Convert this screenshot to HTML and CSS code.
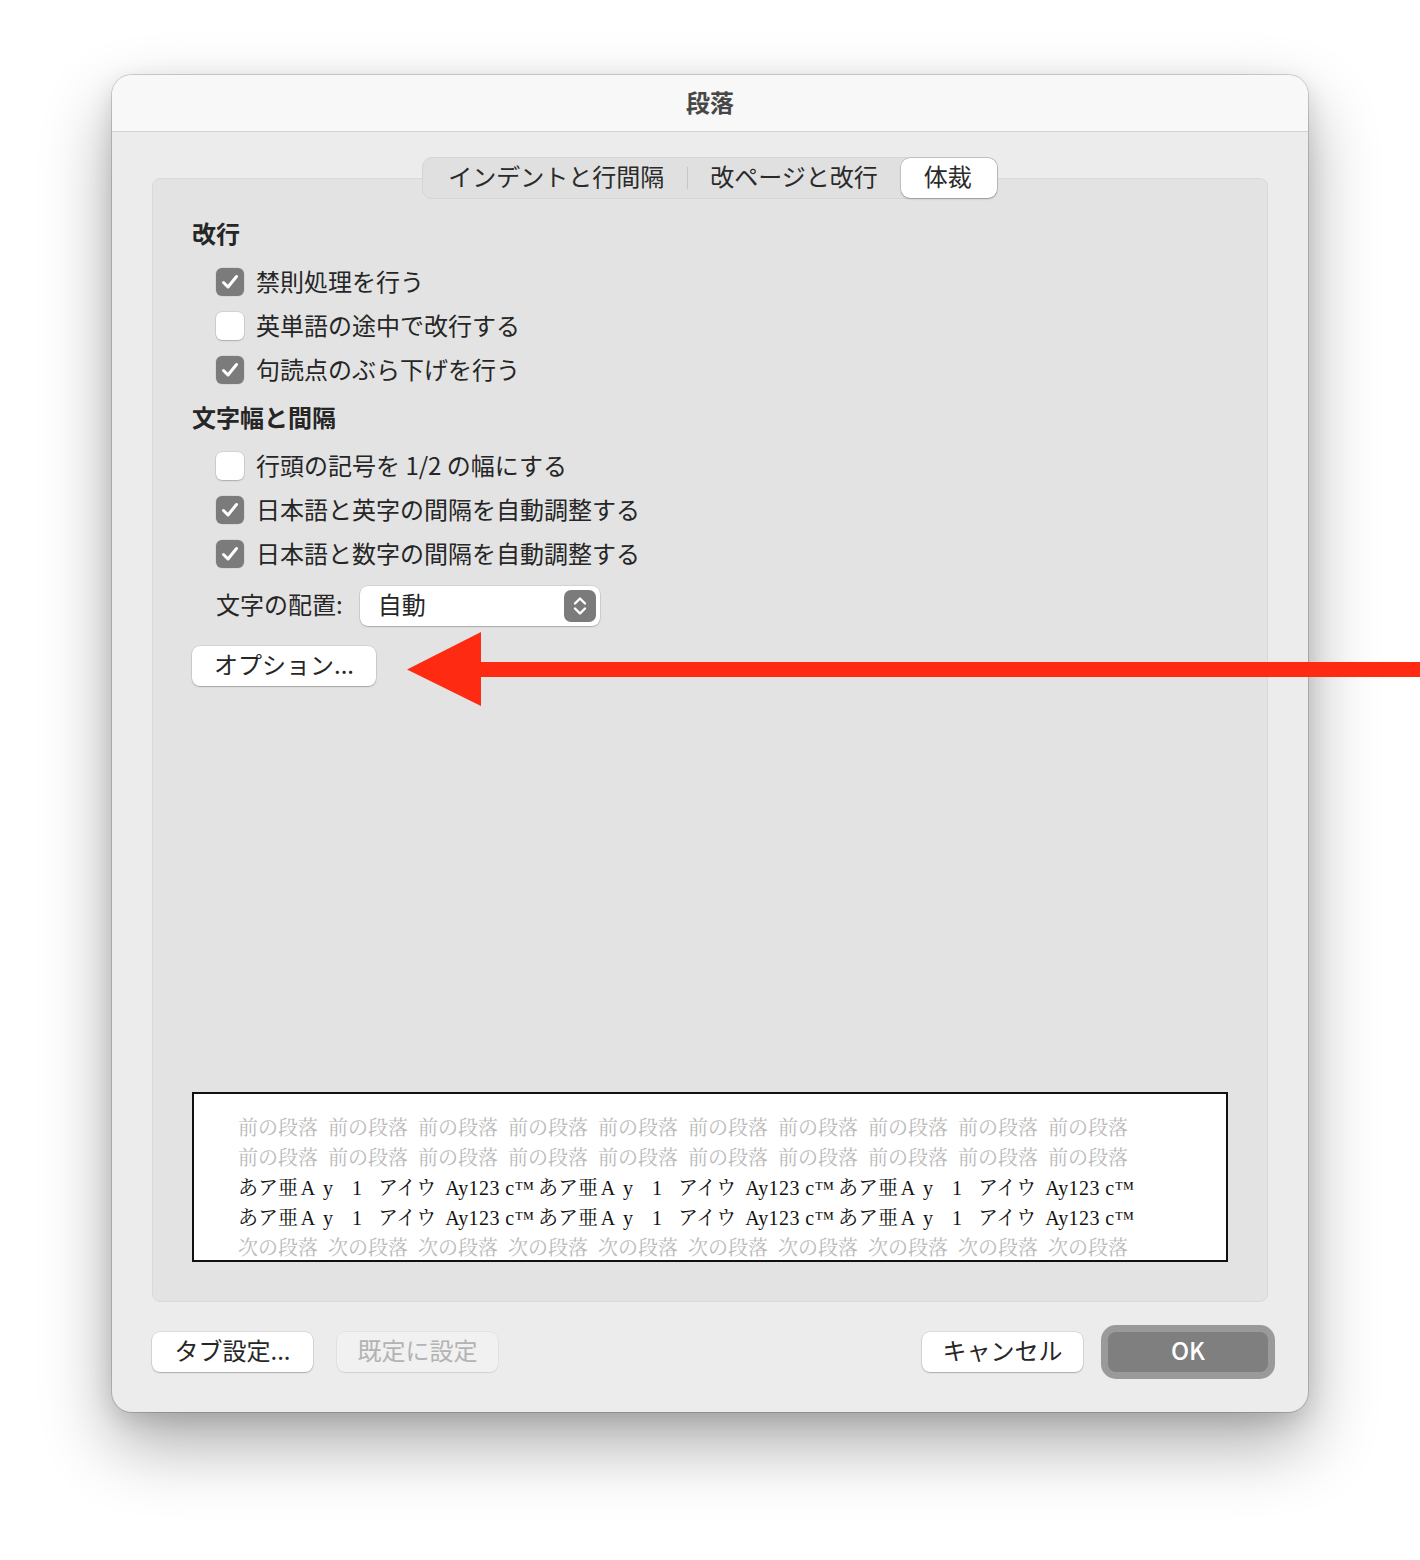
FILE: index.html
```html
<!DOCTYPE html>
<html lang="ja">
<head>
<meta charset="utf-8">
<title>段落</title>
<link rel="stylesheet" href="styles.css">
</head>
<body>
<div class="stage">
  <div class="window">
    <div class="titlebar">段落</div>
    <div class="content">
      <div class="tabs">
        <div class="tab t1">インデントと行間隔</div>
        <div class="tab-sep"></div>
        <div class="tab t2">改ページと改行</div>
        <div class="tab t3 active">体裁</div>
      </div>
      <div class="group">
        <div class="section-title">改行</div>
        <div class="opts">
          <div class="row"><span class="cb on"><svg viewBox="0 0 28 28" width="28" height="28"><path d="M7.5 14.5 L12 19 L20.5 8.5" fill="none" stroke="#fff" stroke-width="3" stroke-linecap="round" stroke-linejoin="round"/></svg></span><span class="lbl">禁則処理を行う</span></div>
          <div class="row"><span class="cb"></span><span class="lbl">英単語の途中で改行する</span></div>
          <div class="row"><span class="cb on"><svg viewBox="0 0 28 28" width="28" height="28"><path d="M7.5 14.5 L12 19 L20.5 8.5" fill="none" stroke="#fff" stroke-width="3" stroke-linecap="round" stroke-linejoin="round"/></svg></span><span class="lbl">句読点のぶら下げを行う</span></div>
        </div>
        <div class="section-title s2">文字幅と間隔</div>
        <div class="opts">
          <div class="row"><span class="cb"></span><span class="lbl">行頭の記号を 1/2 の幅にする</span></div>
          <div class="row"><span class="cb on"><svg viewBox="0 0 28 28" width="28" height="28"><path d="M7.5 14.5 L12 19 L20.5 8.5" fill="none" stroke="#fff" stroke-width="3" stroke-linecap="round" stroke-linejoin="round"/></svg></span><span class="lbl">日本語と英字の間隔を自動調整する</span></div>
          <div class="row"><span class="cb on"><svg viewBox="0 0 28 28" width="28" height="28"><path d="M7.5 14.5 L12 19 L20.5 8.5" fill="none" stroke="#fff" stroke-width="3" stroke-linecap="round" stroke-linejoin="round"/></svg></span><span class="lbl">日本語と数字の間隔を自動調整する</span></div>
        </div>
        <div class="field-row">
          <span class="field-label">文字の配置:</span>
          <div class="select">
            <span class="select-value">自動</span>
            <span class="stepper"><svg viewBox="0 0 32 32" width="32" height="32"><path d="M11 13.5 L16 8.5 L21 13.5 M11 18.5 L16 23.5 L21 18.5" fill="none" stroke="#fff" stroke-width="2.4" stroke-linecap="round" stroke-linejoin="round"/></svg></span>
          </div>
        </div>
        <button class="btn opt-btn">オプション...</button>
        <div class="preview">
          <div class="pl gray"><span class="w">前の段落</span><span class="w">前の段落</span><span class="w">前の段落</span><span class="w">前の段落</span><span class="w">前の段落</span><span class="w">前の段落</span><span class="w">前の段落</span><span class="w">前の段落</span><span class="w">前の段落</span><span class="w">前の段落</span></div>
          <div class="pl gray"><span class="w">前の段落</span><span class="w">前の段落</span><span class="w">前の段落</span><span class="w">前の段落</span><span class="w">前の段落</span><span class="w">前の段落</span><span class="w">前の段落</span><span class="w">前の段落</span><span class="w">前の段落</span><span class="w">前の段落</span></div>
          <div class="pl"><span class="u">あア亜<span class="fw">A</span><span class="fw">y</span><span class="one">1</span>アイウ<span class="lat">Ay123 c™</span></span><span class="u">あア亜<span class="fw">A</span><span class="fw">y</span><span class="one">1</span>アイウ<span class="lat">Ay123 c™</span></span><span class="u">あア亜<span class="fw">A</span><span class="fw">y</span><span class="one">1</span>アイウ<span class="lat">Ay123 c™</span></span></div>
          <div class="pl"><span class="u">あア亜<span class="fw">A</span><span class="fw">y</span><span class="one">1</span>アイウ<span class="lat">Ay123 c™</span></span><span class="u">あア亜<span class="fw">A</span><span class="fw">y</span><span class="one">1</span>アイウ<span class="lat">Ay123 c™</span></span><span class="u">あア亜<span class="fw">A</span><span class="fw">y</span><span class="one">1</span>アイウ<span class="lat">Ay123 c™</span></span></div>
          <div class="pl gray"><span class="w">次の段落</span><span class="w">次の段落</span><span class="w">次の段落</span><span class="w">次の段落</span><span class="w">次の段落</span><span class="w">次の段落</span><span class="w">次の段落</span><span class="w">次の段落</span><span class="w">次の段落</span><span class="w">次の段落</span></div>
        </div>
      </div>
    </div>
    <div class="footer">
      <div class="btn-group">
        <button class="btn">タブ設定...</button>
        <button class="btn disabled">既定に設定</button>
      </div>
      <div class="btn-group right">
        <button class="btn">キャンセル</button>
        <button class="btn primary">OK</button>
      </div>
    </div>
  </div>
  <svg class="arrow" width="1420" height="1560" viewBox="0 0 1420 1560">
    <rect x="476" y="662" width="944" height="15" fill="#fe2a12"/>
    <polygon points="407,669.5 481,632 481,706" fill="#fe2a12"/>
  </svg>
</div>
</body>
</html>
```

FILE: styles.css
```css
* { box-sizing: border-box; }

html, body {
  margin: 0;
  padding: 0;
  background: #ffffff;
}

body {
  width: 1420px;
  height: 1560px;
  overflow: hidden;
  font-family: "Noto Sans CJK JP", "Noto Sans", sans-serif;
  color: #262626;
}

.stage {
  position: relative;
  width: 1420px;
  height: 1560px;
  padding: 75px 0 0 112px;
}

.window {
  width: 1196px;
  background: #ececec;
  border-radius: 20px;
  overflow: hidden;
  box-shadow: 0 0 0 1px rgba(0,0,0,0.16), 0 32px 70px rgba(0,0,0,0.33), 0 8px 24px rgba(0,0,0,0.12);
}

.titlebar {
  height: 57px;
  background: #f8f8f8;
  border-bottom: 1px solid #d3d3d3;
  text-align: center;
  font-size: 24px;
  font-weight: 700;
  line-height: 54px;
  color: #474747;
}

.content {
  padding: 25px 40px 0;
}

.tabs {
  position: relative;
  z-index: 1;
  display: flex;
  align-items: center;
  width: max-content;
  height: 42px;
  margin: 0 auto;
  background: #e0e0e0;
  border: 1px solid #d5d5d5;
  border-radius: 10px;
}

.tab {
  height: 40px;
  line-height: 36px;
  font-size: 24px;
  color: #2a2a2a;
  white-space: nowrap;
}

.t1 { padding: 0 23px 0 25px; }
.t2 { padding: 0 22px; }
.t3 { padding: 0 25px 0 23px; margin-left: 1px; }

.tab-sep {
  width: 1px;
  height: 22px;
  background: #c6c6c6;
}

.tab.active {
  background: #ffffff;
  border-radius: 9px;
  box-shadow: 0 0 0 0.5px rgba(0,0,0,0.18), 0 1px 2px rgba(0,0,0,0.22);
  height: 40px;
}

.group {
  display: flex;
  flex-direction: column;
  align-items: flex-start;
  height: 1124px;
  margin-top: -21px;
  padding: 40px 39px 39px;
  background: #e3e3e3;
  border: 1px solid #d9d9d9;
  border-radius: 8px;
}

.section-title {
  font-size: 24px;
  line-height: 28px;
  height: 32px;
  font-weight: 700;
  color: #262626;
}

.section-title.s2 { margin-top: 11px; }

.opts {
  margin-top: 9px;
  display: flex;
  flex-direction: column;
}

.row {
  display: flex;
  align-items: center;
  height: 44px;
  padding-left: 24px;
}

.cb {
  display: inline-flex;
  width: 28px;
  height: 28px;
  margin-right: 12px;
  border-radius: 6px;
  background: #ffffff;
  box-shadow: 0 0 0 0.5px rgba(0,0,0,0.14), 0 1px 1.5px rgba(0,0,0,0.18);
}

.cb.on {
  background: #7b7b7b;
  box-shadow: 0 0 0 0.5px rgba(0,0,0,0.1);
}

.lbl {
  font-size: 24px;
  line-height: 30px;
  padding-bottom: 2px;
  color: #262626;
  white-space: nowrap;
}

.field-row {
  display: flex;
  align-items: center;
  margin-top: 10px;
  height: 40px;
  padding-left: 24px;
}

.field-label {
  font-size: 24px;
  line-height: 30px;
  padding-bottom: 4px;
  margin-right: 17px;
  white-space: nowrap;
}

.select {
  display: flex;
  align-items: center;
  justify-content: space-between;
  width: 240px;
  height: 40px;
  padding: 0 4px 0 18px;
  background: #ffffff;
  border-radius: 8px;
  box-shadow: 0 0 0 0.5px rgba(0,0,0,0.14), 0 1px 1.5px rgba(0,0,0,0.2);
}

.select-value {
  font-size: 24px;
  line-height: 30px;
  padding-bottom: 4px;
}

.stepper {
  display: inline-flex;
  width: 32px;
  height: 32px;
  background: #7b7b7b;
  border-radius: 7px;
}

.btn {
  font-family: "Noto Sans CJK JP", "Noto Sans", sans-serif;
  font-size: 24px;
  color: #262626;
  height: 40px;
  width: 161px;
  padding: 0 0 4px;
  border: none;
  border-radius: 8px;
  background: #ffffff;
  box-shadow: 0 0 0 0.5px rgba(0,0,0,0.14), 0 1px 1.5px rgba(0,0,0,0.22);
  line-height: 36px;
  white-space: nowrap;
}

.opt-btn {
  width: 184px;
  margin-top: 20px;
}

.preview {
  margin-top: auto;
  width: 1036px;
  height: 170px;
  padding: 19px 0 0 44px;
  background: #ffffff;
  border: 2px solid #111111;
  overflow: hidden;
  font-family: "Liberation Serif", "Noto Serif CJK JP", "Noto Sans CJK JP", serif;
  font-size: 20px;
  color: #111111;
}

.pl {
  height: 30px;
  line-height: 30px;
  white-space: nowrap;
}

.pl.gray { color: #b9b9b9; }

.w {
  display: inline-block;
  margin-right: 10px;
}

.u {
  display: inline-block;
  width: 300px;
  white-space: nowrap;
}

.fw {
  display: inline-block;
  width: 20px;
  text-align: center;
}

.one {
  display: inline-block;
  width: 38px;
  text-align: center;
  margin-right: 2px;
}

.lat {
  display: inline-block;
  margin-left: 9px;
  letter-spacing: 0.4px;
}

.footer {
  display: flex;
  justify-content: space-between;
  padding: 30px 40px 40px;
}

.btn-group {
  display: flex;
  gap: 24px;
}

.btn-group.right { gap: 25px; }

.btn.disabled {
  background: #f1f1f1;
  color: #b3b3b3;
  box-shadow: 0 0 0 0.5px rgba(0,0,0,0.08), 0 1px 1px rgba(0,0,0,0.08);
}

.btn.primary {
  width: 160px;
  background: #7f7f7f;
  color: #ffffff;
  font-weight: 500;
  box-shadow: 0 0 0 7px #9a9a9a;
}

.arrow {
  position: absolute;
  left: 0;
  top: 0;
  pointer-events: none;
}
```
